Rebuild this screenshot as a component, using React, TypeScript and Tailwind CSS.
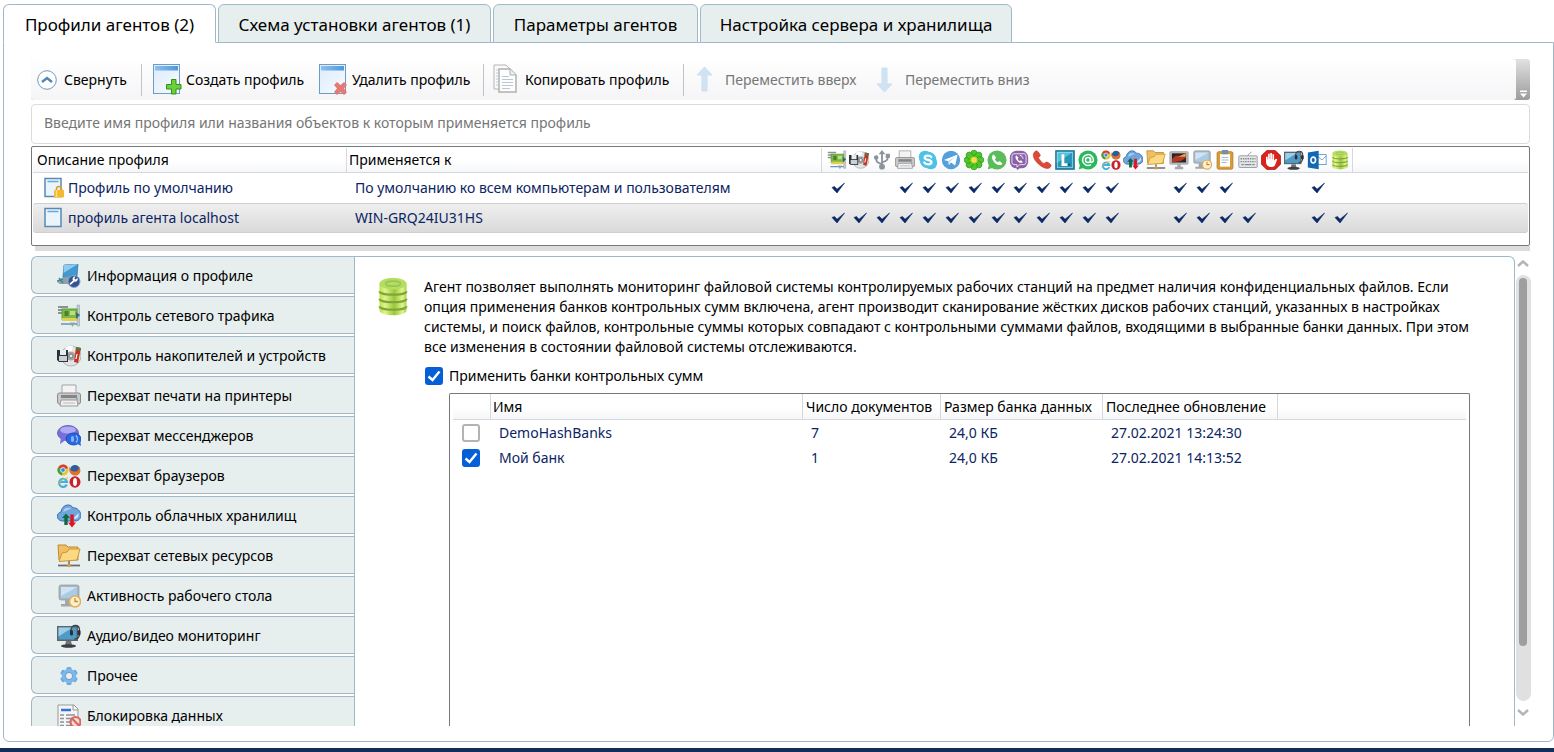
import type { ReactNode } from "react";

type IconName =
  | "net" | "disk" | "usb" | "printer" | "skype" | "telegram" | "icq" | "whatsapp" | "viber" | "phone"
  | "lync" | "agent" | "browsers" | "cloud" | "folder" | "screen" | "desktop" | "clipboard" | "keyboard"
  | "stop" | "av" | "outlook" | "db" | "info" | "chat" | "gear" | "block";

const drawings: Record<IconName, ReactNode> = {
  net: (
    <>
      <path d="M1 3h10M1 6h8M1 9h6" stroke="#8b9297" strokeWidth="2" />
      <path d="M20 1h2.500v21h-2.500z" fill="#c3ccd1" stroke="#8e9aa1" strokeWidth=".5" />
      <rect x="5" y="5" width="15" height="10" fill="#7cb944" stroke="#5f9d36" />
      <path d="M5 14h15v3h-15z" fill="#e2cf4e" />
      <rect x="7.500" y="7" width="4" height="5" fill="#4b8130" />
      <rect x="13" y="7" width="5" height="4" fill="#b7df8b" />
      <path d="M19 8l4 3-4 4z" fill="#3d6a6a" />
      <path d="M4 20h16" stroke="#5c97c7" strokeWidth="1.500" />
      <path d="M13 18.500h5l-2.500 4.500z" fill="#8fa3b0" />
    </>
  ),
  disk: (
    <>
      <circle cx="14" cy="12" r="10" fill="#e3e4e6" stroke="#b3b3b3" />
      <path d="M14 12L8 3.500a10 10 0 0 1 8-1.300z" fill="#fff" />
      <circle cx="14" cy="12" r="4.500" fill="#a2a4a8" />
      <circle cx="14" cy="12" r="2" fill="#e9e9e9" stroke="#777" />
      <path d="M0 6h11v12H2l-2-2z" fill="#2e3338" />
      <rect x="3" y="6" width="6" height="5" fill="#e7eef3" />
      <rect x="2" y="12" width="8" height="5" fill="#c7d1d8" />
      <path d="M19 3l5 1-3 15-4-1z" fill="#c73323" />
      <path d="M19.500 3l4.500 1-.6 3-4.500-1z" fill="#4b7b41" />
      <path d="M20 10l-1 5" stroke="#fff" strokeWidth="1.200" />
    </>
  ),
  usb: (
    <>
      <path d="M12 20V3M12 17C6 15 5 14 5 10M12 15c6-2 7-3 7-7" fill="none" stroke="#8d939b" strokeWidth="2.200" />
      <path d="M12 0l4 5H8z" fill="#8d939b" />
      <circle cx="12" cy="20" r="3.500" fill="#8d939b" />
      <circle cx="5" cy="9" r="2.700" fill="#8d939b" />
      <rect x="16.500" y="4.500" width="5" height="5" fill="#8d939b" />
    </>
  ),
  printer: (
    <>
      <path d="M5 1h14v10H5z" fill="#f4f4f4" stroke="#a3a3a3" />
      <rect x=".5" y="9" width="23" height="11" rx="2" fill="#c9c9c9" stroke="#8c8c8c" />
      <rect x="4" y="11" width="16" height="3" fill="#858585" />
      <path d="M4 16h16l1 6H3z" fill="#f1f1f1" stroke="#9b9b9b" />
      <path d="M6 19h12" stroke="#bbb" />
      <circle cx="20" cy="15" r="1" fill="#6bb1cf" />
    </>
  ),
  skype: (
    <>
      <rect x="1" y="1" width="15" height="15" rx="7" fill="#4fc0e6" />
      <rect x="8" y="8" width="15" height="15" rx="7" fill="#4fc0e6" />
      <circle cx="12" cy="12" r="10" fill="#4fc0e6" />
      <path d="M16 8.500C14.500 6 8 6 8 9.200c0 3.600 8.200 1.800 8.200 5.600 0 3.200-7 3.400-8.700.2" fill="none" stroke="#fff" strokeWidth="2.600" strokeLinecap="round" />
    </>
  ),
  telegram: (
    <>
      <circle cx="12" cy="12" r="11" fill="#559fdc" />
      <path d="M3.500 12L20 5.500 17 18.500l-5-3.500-2.500 3-.8-4.500z" fill="#fff" />
      <path d="M8.800 13.500L17 7.800l-6.500 6.700-1 3.500z" fill="#b6d5ef" />
    </>
  ),
  icq: (
    <>
      {[0, 45, 90, 135, 180, 225, 270, 315].map((a) => (
        <ellipse key={a} cx="12" cy="5" rx="3.800" ry="5" transform={`rotate(${a} 12 12)`} fill="#4fc62c" stroke="#289417" strokeWidth=".8" />
      ))}
      <circle cx="12" cy="12" r="4" fill="#f5e04a" stroke="#a8c12a" />
    </>
  ),
  whatsapp: (
    <>
      <circle cx="12" cy="12" r="11.500" fill="#5bbc5c" />
      <path d="M1 23l2-8 6 6z" fill="#5bbc5c" />
      <path d="M8 5.500C4.500 7 6 12 9.200 15.200s8 4 9.300 1l-3.500-3-2 1.500c-1.500-.6-3-2.200-3.500-3.700L11 9z" fill="#fff" />
    </>
  ),
  viber: (
    <>
      <rect x="1" y="1" width="22" height="21" rx="8" fill="#8b62a8" />
      <path d="M8 20h7l-5 4z" fill="#8b62a8" />
      <path d="M6 4.500h12q2.500 0 2.500 3v7q0 3-2.500 3h-5l-3.500 3v-3H6q-2.500 0-2.500-3v-7q0-3 2.500-3z" fill="none" stroke="#e6dcec" strokeWidth="1.200" />
      <path d="M9 6.500c-2.500 1-1 4.500 1.200 6.600s5.400 3.400 6.400 1.200l-2.200-1.900-1.600.9c-1-.4-2-1.500-2.300-2.700l1-1.200z" fill="#fff" />
      <path d="M13 6.500c2.500.4 3.600 1.700 3.800 4" fill="none" stroke="#fff" strokeWidth="1.200" />
    </>
  ),
  phone: <path d="M5 1C-1 4 1 11 8 17s13 7 15 2c.500-1.500-4-4.500-5.500-4.500S15 17 13.500 16 8.500 11 8 9.500 10 8 10 6.500 6.500.5 5 1z" fill="#dc4a37" stroke="#b93524" strokeWidth=".6" />,
  lync: (
    <>
      <rect x="1" y="1" width="22" height="22" fill="#2796b8" stroke="#256f88" strokeWidth="1.500" />
      <path d="M2 2h20L2 16z" fill="#55c0dc" />
      <rect x="2.800" y="2.800" width="18.400" height="18.400" fill="none" stroke="#a2e0f0" strokeWidth=".8" />
      <path d="M9.500 5v12.500H15" fill="none" stroke="#fff" strokeWidth="3.400" />
      <rect x="15.500" y="16" width="3" height="3" fill="#1c6480" />
    </>
  ),
  agent: (
    <>
      <path d="M1 23l2-8 6 6z" fill="#27b95b" />
      <circle cx="12" cy="12" r="11.500" fill="#27b95b" />
      <circle cx="12" cy="12" r="3" fill="none" stroke="#fff" strokeWidth="1.800" />
      <path d="M15 9v4.500c0 2 3.500 2 3.500-1.500a6.500 6.500 0 1 0-3 5.500" fill="none" stroke="#fff" strokeWidth="1.800" />
    </>
  ),
  browsers: (
    <>
      <circle cx="6" cy="6" r="5.500" fill="#e2c43a" />
      <path d="M6 6L1.200 3.200A5.500 5.500 0 0 1 11 4z" fill="#d6402d" />
      <path d="M6 6L1.200 3.200A5.500 5.500 0 0 0 5 11.400z" fill="#43a047" />
      <circle cx="6" cy="6" r="2.400" fill="#4489d8" stroke="#fff" strokeWidth=".8" />
      <circle cx="18" cy="6" r="5" fill="#2f5e9c" />
      <path d="M12.500 2c.5 5 2.500 5.500 5.500 5.500 2 0 4-1 4-5 3 4 1 9-4 9-3.500 0-7-3.500-5.500-9.500z" fill="#e1702a" />
      <path d="M9.800 20.500A4 4 0 1 1 10 18H3" fill="none" stroke="#48aee0" strokeWidth="2.200" />
      <path d="M1 21c0-3 6-7 10-7" fill="none" stroke="#e6bf3d" strokeWidth="1" />
      <ellipse cx="18" cy="18" rx="5.500" ry="5.800" fill="#c9202a" />
      <ellipse cx="18" cy="18" rx="2" ry="4" fill="#fff" />
    </>
  ),
  cloud: (
    <>
      <path d="M5 17C-1 16-1 9 4 8 5 0 14-1 16 4c4-1 8 4 8 7 0 4-3 6-6 6z" fill="#6fa6dd" stroke="#3d6eae" />
      <path d="M6 8c1-5 7-5 8-3-3 0-5 2-8 3z" fill="#b3d3f2" />
      <path d="M17 15c4 0 5-3 4.500-6-2 3-4 3-4.500 6z" fill="#d5e7f8" />
      <path d="M9 9.500l4 4.500h-2.300v7H7.300v-7H5z" fill="#0f6a44" />
      <path d="M15 23.500l4-5h-2.300v-8h-3.400v8H11z" fill="#e01420" />
    </>
  ),
  folder: (
    <>
      <path d="M1 1h8l2 2h10v13H2z" fill="#efc063" stroke="#bf8a31" />
      <path d="M5 9l5-1 2-3h11l-3 11L2 17.500z" fill="#fbd981" stroke="#c9963c" />
      <path d="M1 21.500h22" stroke="#6d6d6d" strokeWidth="1.800" />
      <path d="M12 17v4" stroke="#8a8a8a" strokeWidth="2" />
      <circle cx="12" cy="21.500" r="1.800" fill="#d89d3c" />
    </>
  ),
  screen: (
    <>
      <rect x="1" y="2" width="22" height="15" rx="1" fill="#b9bdc2" stroke="#9fa4a9" />
      <rect x="3.500" y="4" width="17" height="11" fill="#2f2423" />
      <path d="M3.500 15V11L8 7h12.500v2L15 13z" fill="#b23a25" />
      <path d="M11 8h9v-4z" fill="#eca33b" />
      <path d="M10 17h4v3h-4zM7 20h10v3H7z" fill="#a4a8ac" />
    </>
  ),
  desktop: (
    <>
      <rect x="2" y="1" width="20" height="15" rx="2" fill="#a9b4be" stroke="#8d99a5" strokeWidth=".7" />
      <rect x="4" y="3" width="16" height="11" fill="#a8cbe6" />
      <path d="M4 3h16L4 12z" fill="#cfe3f2" />
      <path d="M8 16h6v4H8zM4 20h12v2.500H4z" fill="#a3a7aa" />
      <circle cx="18" cy="17.500" r="5.500" fill="#fdf0cd" stroke="#e2b05a" strokeWidth="1.500" />
      <path d="M18 14V17.500h3" fill="none" stroke="#c08a35" strokeWidth="1.300" />
    </>
  ),
  clipboard: (
    <>
      <rect x="2.500" y="2" width="19" height="21" rx="2" fill="#d99c3b" stroke="#b47c2a" />
      <rect x="6" y="5" width="12" height="15" fill="#fbfcfd" />
      <rect x="8" y="0" width="8" height="5" rx="1" fill="#7b8fa3" />
      <path d="M8 9h8M8 12h8M8 15h6" stroke="#99aac0" />
    </>
  ),
  keyboard: (
    <>
      <rect x="1" y="7" width="22" height="14" rx="1" fill="#e4e7e9" stroke="#9aa0a5" strokeWidth="1.200" />
      <path d="M12 7c0-4 4-2 4-5" fill="none" stroke="#8c9298" />
      <path d="M3 10.500h18M3 14h18" stroke="#868c92" strokeWidth="1.600" strokeDasharray="1.800 1" />
      <path d="M4 17.500h3M8 17.500h8M17 17.500h3" stroke="#868c92" strokeWidth="1.600" />
    </>
  ),
  stop: (
    <>
      <path d="M7 .5h10L23.500 7v10L17 23.500H7L.5 17V7z" fill="#d9241c" stroke="#b01a14" />
      <path d="M6 9v5c0 4 3 6.500 6.500 6.500s4.500-2 5.500-5.500l1.500-4-1.800-.6-2 2.600V5h-2v6h-.6V3.500h-2V11h-.6V4.500h-2v7h-.5V8H6z" fill="#fff" />
    </>
  ),
  av: (
    <>
      <rect x="0" y="2" width="21" height="15" fill="#5a656d" />
      <rect x="1.500" y="3.500" width="18" height="12" fill="#4f9bc8" />
      <path d="M1.500 3.500h14l-14 9z" fill="#9fcde6" />
      <path d="M9 17h5l1 4H8z" fill="#707478" />
      <ellipse cx="11.500" cy="22" rx="7.500" ry="1.800" fill="#3c3f42" />
      <path d="M14 8V6c0-6 8.500-6 8.500 0v4c0 3-2 5-5 5" fill="none" stroke="#3d4348" strokeWidth="1.300" />
      <rect x="13" y="6" width="3" height="5.500" rx="1.500" fill="#2b2f33" />
      <rect x="20.500" y="6" width="3" height="5.500" rx="1.500" fill="#2b2f33" />
    </>
  ),
  outlook: (
    <>
      <rect x="12" y="5.500" width="11" height="12" fill="#fff" stroke="#5d94c9" />
      <path d="M12 7l6 5 5-5" fill="none" stroke="#5d94c9" />
      <path d="M1 3l13-2v22L1 21z" fill="#1268b3" />
      <ellipse cx="7.500" cy="12" rx="2.800" ry="3.500" fill="none" stroke="#fff" strokeWidth="1.900" />
    </>
  ),
  db: (
    <>
      <defs>
        <linearGradient id="db-side" x1="0" x2="1" y1="0" y2="0">
          <stop offset="0" stopColor="#b9de4c" />
          <stop offset=".2" stopColor="#e0f58c" />
          <stop offset=".55" stopColor="#9cc63c" />
          <stop offset=".85" stopColor="#e0f58c" />
          <stop offset="1" stopColor="#a8d044" />
        </linearGradient>
      </defs>
      <path d="M3 4v16c0 4 18 4 18 0V4z" fill="url(#db-side)" />
      <path d="M3 8.500c0 2.800 18 2.800 18 0M3 13c0 2.800 18 2.800 18 0M3 17.500c0 2.800 18 2.800 18 0" fill="none" stroke="#7ea63a" strokeWidth="1.300" />
      <ellipse cx="12" cy="4" rx="9" ry="3.500" fill="#b4dd62" />
      <ellipse cx="12" cy="4" rx="5" ry="1.500" fill="none" stroke="#98c654" />
    </>
  ),
  info: (
    <>
      <path d="M7 1l14-1-1 12-14 1z" fill="#3f9ad4" stroke="#2871a5" strokeWidth=".7" />
      <path d="M7 1l14-1L6.500 9z" fill="#8ecbec" />
      <path d="M6 13l12-1-6 8H3l-3-2z" fill="#8aa2b0" />
      <path d="M2 14l4 5M0 17l6-2" stroke="#3e8e8e" strokeWidth="1.500" />
      <circle cx="17" cy="17.500" r="6" fill="#35548f" stroke="#8aa4cc" />
      <path d="M13.500 21l4-3.500a2.500 2.500 0 0 0 3-3.500l-2 1.500-1.200-1 1.200-2c-2.500 0-3.500 2-2.500 4l-3.500 3z" fill="#fff" />
    </>
  ),
  chat: (
    <>
      <ellipse cx="11" cy="9" rx="10.500" ry="7.500" fill="#7670dc" stroke="#5550b2" strokeWidth=".8" />
      <path d="M4 13l-1 7 7-5z" fill="#7670dc" />
      <ellipse cx="11" cy="6" rx="8" ry="3.500" fill="#b2a9f5" />
      <ellipse cx="16.500" cy="15" rx="7.500" ry="6" fill="#2a66df" stroke="#1b3fae" strokeWidth=".8" />
      <path d="M19 19l5 3-1-7z" fill="#2a66df" />
      <path d="M19 11.500c1.800 2 1.800 5 0 7" fill="none" stroke="#9ad0ff" strokeWidth="1.200" />
      <rect x="14" y="12" width="3" height="6" rx="1.500" fill="#78b8f8" />
    </>
  ),
  gear: (
    <>
      {[0, 60, 120, 180, 240, 300].map((a) => (
        <rect key={a} x="9.500" y="3" width="5" height="6" rx="1.500" transform={`rotate(${a} 12 12)`} fill="#6aaae0" />
      ))}
      <circle cx="12" cy="12" r="5.500" fill="none" stroke="#7db8e8" strokeWidth="3.400" />
      <circle cx="12" cy="12" r="3.600" fill="#e8eeee" stroke="#5292c9" strokeWidth=".8" />
    </>
  ),
  block: (
    <>
      <path d="M1 1h16l4 4v19H1z" fill="#f4f5f6" stroke="#999" />
      <path d="M16 1v5h5" fill="none" stroke="#999" />
      <path d="M4 6h10" stroke="#2f74dc" strokeWidth="2.500" />
      <path d="M3 11h4M9 11h9M3 14.500h4M9 14.500h9M3 18h4M9 18h5M3 21.500h4M9 21.500h5" stroke="#8e9296" strokeWidth="1.500" />
      <circle cx="18.500" cy="18" r="5" fill="#f6dcd9" stroke="#d9675c" strokeWidth="2.200" />
      <path d="M15 14.500l7 7" stroke="#d9675c" strokeWidth="2.200" />
    </>
  ),
};

function Icon({ name, className }: { name: IconName; className: string }) {
  return (
    <svg viewBox="0 0 24 24" className={`shrink-0 ${className}`} aria-hidden="true">
      {drawings[name]}
    </svg>
  );
}

const headerIcons: IconName[] = [
  "net", "disk", "usb", "printer", "skype", "telegram", "icq", "whatsapp", "viber", "phone", "lync", "agent",
  "browsers", "cloud", "folder", "screen", "desktop", "clipboard", "keyboard", "stop", "av", "outlook", "db",
];
const narrowColumns = [1, 8, 13];

const profiles = [
  {
    name: "Профиль по умолчанию",
    target: "По умолчанию ко всем компьютерам и пользователям",
    locked: true,
    selected: false,
    checks: [0, 3, 4, 5, 6, 7, 8, 9, 10, 11, 12, 15, 16, 17, 21],
  },
  {
    name: "профиль агента localhost",
    target: "WIN-GRQ24IU31HS",
    locked: false,
    selected: true,
    checks: [0, 1, 2, 3, 4, 5, 6, 7, 8, 9, 10, 11, 12, 15, 16, 17, 18, 21, 22],
  },
];

const sections: { icon: IconName; label: string }[] = [
  { icon: "info", label: "Информация о профиле" },
  { icon: "net", label: "Контроль сетевого трафика" },
  { icon: "disk", label: "Контроль накопителей и устройств" },
  { icon: "printer", label: "Перехват печати на принтеры" },
  { icon: "chat", label: "Перехват мессенджеров" },
  { icon: "browsers", label: "Перехват браузеров" },
  { icon: "cloud", label: "Контроль облачных хранилищ" },
  { icon: "folder", label: "Перехват сетевых ресурсов" },
  { icon: "desktop", label: "Активность рабочего стола" },
  { icon: "av", label: "Аудио/видео мониторинг" },
  { icon: "gear", label: "Прочее" },
  { icon: "block", label: "Блокировка данных" },
];

const banks = [
  { name: "DemoHashBanks", count: "7", size: "24,0 КБ", updated: "27.02.2021 13:24:30", on: false },
  { name: "Мой банк", count: "1", size: "24,0 КБ", updated: "27.02.2021 14:13:52", on: true },
];

function WindowIcon({ badge }: { badge: "add" | "remove" }) {
  return (
    <svg viewBox="0 0 30 32" className="h-8 w-[30px] shrink-0" aria-hidden="true">
      <defs>
        <linearGradient id={`win-${badge}`} x1="0" y1="0" x2="1" y2="1">
          <stop offset="0" stopColor="#dcebfb" />
          <stop offset="1" stopColor="#f7fbff" />
        </linearGradient>
        <linearGradient id={`bar-${badge}`} x1="0" y1="0" x2="1" y2="0">
          <stop offset="0" stopColor="#8fc0ee" />
          <stop offset="1" stopColor="#4f97da" />
        </linearGradient>
      </defs>
      <rect x=".5" y=".5" width="26" height="29" fill={`url(#win-${badge})`} stroke="#6d9cc4" />
      <rect x="2" y="2" width="23" height="4.500" fill={`url(#bar-${badge})`} />
      {badge === "add" ? (
        <path d="M18.500 15.500h4.500v5h5v4.500h-5v5h-4.500v-5h-5v-4.500h5z" fill="#6cd03a" stroke="#2f8f1f" />
      ) : (
        <path d="M18 18l3.500 3L25 18l3 3-3 3.500 3 3.500-3 3-3.500-3-3.500 3-3-3 3-3.500-3-3.500z" fill="#e57a73" />
      )}
    </svg>
  );
}

function CopyIcon() {
  return (
    <svg viewBox="0 0 26 32" className="h-8 w-[26px] shrink-0" aria-hidden="true">
      <path d="M1 1h12l5 5v19H1z" fill="#fafafa" stroke="#b4b4b4" />
      <path d="M3 6h2M3 9h2M3 12h2M3 15h2M3 18h2M3 21h2" stroke="#c5ccd2" />
      <path d="M6 5h11l6 6v17H6z" fill="#fdfdfd" stroke="#b0b0b0" strokeWidth="1.500" />
      <path d="M17 5v6h6" fill="#eee" stroke="#b0b0b0" />
      <path d="M9 12.500h7M9 15.500h11M9 18.500h11M9 21.500h11M9 24.500h8" stroke="#b9c6d4" />
    </svg>
  );
}

function MoveIcon({ down = false }: { down?: boolean }) {
  return (
    <svg viewBox="0 0 18 28" className="h-7 w-[18px] shrink-0" aria-hidden="true">
      <path d={down ? "M6 2h5v16h5l-7.500 8L1 18h5z" : "M8.500 1l7.500 8h-5v16H6V9H1z"} fill="#d0e3f4" stroke="#cbdff1" strokeLinejoin="round" />
    </svg>
  );
}

function PageIcon({ locked }: { locked: boolean }) {
  return (
    <svg viewBox="0 0 20 22" className="h-[22px] w-5 shrink-0" aria-hidden="true">
      <rect x="1" y="1.500" width="16" height="18" fill="#eaf4fd" stroke="#5b89b3" strokeWidth="1.500" />
      <path d="M3.500 4.500h11" stroke="#68a8e2" strokeWidth="1.500" />
      {locked && (
        <>
          <path d="M12.500 14v-2a2.500 2.500 0 0 1 5 0v2" fill="none" stroke="#d9a32a" strokeWidth="1.700" />
          <rect x="10" y="13" width="10" height="7.500" rx="1" fill="#f5b92e" />
          <path d="M12.500 13v7" stroke="#fbe08a" strokeWidth="1.500" />
        </>
      )}
    </svg>
  );
}

function CheckMark() {
  return (
    <svg viewBox="0 0 14 12" className="mx-auto block h-3 w-[14px]" role="img" aria-label="да">
      <path d="M1 5.500l2.500-1L6 7.200 13.500 1 6 11z" fill="#0b2a66" stroke="#0b2a66" strokeWidth=".6" />
    </svg>
  );
}

const checkbox =
  "block size-[18px] shrink-0 appearance-none rounded-[3px] border-2 border-[#b3b3b3] bg-white checked:border-[#0560d8] checked:bg-[#0560d8]";

function Checkbox({ id, on, label }: { id: string; on: boolean; label?: string }) {
  return (
    <span className="grid shrink-0">
      <input id={id} type="checkbox" defaultChecked={on} aria-label={label} className={`peer col-start-1 row-start-1 ${checkbox}`} />
      <svg viewBox="0 0 18 18" className="pointer-events-none invisible col-start-1 row-start-1 size-[18px] peer-checked:visible" aria-hidden="true">
        <path d="M3.500 9.500L7.500 13L14.500 4.500" fill="none" stroke="#fff" strokeWidth="2.400" />
      </svg>
    </span>
  );
}

function Tab({ label, active = false, className }: { label: string; active?: boolean; className: string }) {
  return (
    <button
      type="button"
      role="tab"
      aria-selected={active}
      className={`h-[39px] rounded-t-[6px] border border-[#9fb9cb] pt-[2px] text-[17px] whitespace-nowrap ${
        active ? "border-b-white bg-white" : "bg-[#e7eeee]"
      } ${className}`}
    >
      {label}
    </button>
  );
}

function Separator() {
  return <span className="h-8 w-px shrink-0 bg-[#c2c2c8]" />;
}

const headCell = "border-r border-b border-[#d5d9dd] p-0 text-left font-normal whitespace-nowrap";

export default function App() {
  return (
    <div className="flex h-screen flex-col overflow-hidden bg-white pt-1 font-['Noto_Sans','Open_Sans',sans-serif] text-[14px] leading-5 text-black">
      <div role="tablist" className="relative z-10 -mb-px ml-[3px] flex gap-[2px]">
        <Tab label="Профили агентов (2)" active className="w-[213px]" />
        <Tab label="Схема установки агентов (1)" className="w-[273px]" />
        <Tab label="Параметры агентов" className="w-[205px]" />
        <Tab label="Настройка сервера и хранилища" className="w-[312px]" />
      </div>

      <main className="ml-[3px] flex min-h-0 flex-1 flex-col rounded-b-[6px] border border-[#9fb9cb] pt-4 pr-[23px] pb-[15px] pl-[27px]">
        <div className="flex h-[41px] shrink-0 rounded-[3px] bg-linear-to-b from-[#e2e2e2] to-[#9c9c9c]">
          <div role="toolbar" className="flex min-w-0 flex-1 items-center overflow-hidden rounded-[3px] bg-linear-to-b from-white to-[#f5f4f6] pl-[6px] whitespace-nowrap">
            <button type="button" className="flex w-[104px] items-center gap-[7px]">
              <svg viewBox="0 0 20 20" className="size-5 shrink-0" aria-hidden="true">
                <circle cx="10" cy="10" r="9.300" fill="#fff" stroke="#6c99bd" />
                <path d="M5 12L10 8l5 4" fill="none" stroke="#4f86b3" strokeWidth="2.500" />
              </svg>
              Свернуть
            </button>
            <Separator />
            <button type="button" className="ml-[11px] flex w-[166px] items-center gap-[3px]">
              <WindowIcon badge="add" />
              Создать профиль
            </button>
            <button type="button" className="flex w-[164px] items-center gap-[3px]">
              <WindowIcon badge="remove" />
              Удалить профиль
            </button>
            <Separator />
            <button type="button" className="ml-[9px] flex w-[190px] items-center gap-[6px]">
              <CopyIcon />
              Копировать профиль
            </button>
            <Separator />
            <button type="button" disabled className="ml-3 flex w-[180px] items-center gap-[11px] text-[#767676]">
              <MoveIcon />
              Переместить вверх
            </button>
            <button type="button" disabled className="flex items-center gap-[11px] text-[#767676]">
              <MoveIcon down />
              Переместить вниз
            </button>
          </div>
          <button type="button" aria-label="Параметры панели" className="flex w-[14px] shrink-0 items-end justify-center pb-[2px]">
            <svg viewBox="0 0 8 8" className="size-2" aria-hidden="true">
              <path d="M1 .5h7v1.500H1zM1 3.500h7L4.500 7.500z" fill="#fff" />
            </svg>
          </button>
        </div>

        <input
          type="text"
          aria-label="Поиск профиля"
          placeholder="Введите имя профиля или названия объектов к которым применяется профиль"
          className="mt-1 h-10 shrink-0 rounded-[4px] border border-[#dcdcdc] px-3 pb-1 placeholder:text-[#767676]"
        />

        <div className="mt-[2px] h-[100px] shrink-0 overflow-hidden rounded-[2px] border border-[#74787c] px-px pt-px">
          <table className="w-full table-fixed border-separate border-spacing-0">
            <colgroup>
              <col className="w-[314px]" />
              <col className="w-[475px]" />
              <col className="w-1" />
              {headerIcons.map((n, i) => (
                <col key={n} className={narrowColumns.includes(i) ? "w-[22px]" : "w-[23px]"} />
              ))}
              <col />
            </colgroup>
            <thead>
              <tr className="h-[25px] bg-linear-to-b from-white from-50% to-[#f5f6f8]">
                <th className={`${headCell} pl-1`}>Описание профиля</th>
                <th className={`${headCell} pl-[2px]`}>Применяется к</th>
                <th className="border-b border-[#d5d9dd] p-0" />
                {headerIcons.map((n) => (
                  <th key={n} className="border-b border-[#d5d9dd] p-0 pr-[2px]">
                    <Icon name={n} className="mx-auto block size-5" />
                  </th>
                ))}
                <th className="border-b border-l border-[#d5d9dd] p-0" />
              </tr>
            </thead>
            <tbody className="text-[#0b2463]">
              {profiles.map((p) => {
                const cell = p.selected ? "border-y border-[#cfcfcf] bg-linear-to-b from-[#efefef] to-[#dadada]" : "border-y border-transparent";
                return (
                  <tr key={p.name} className="h-[30px]">
                    <td className={`rounded-l-[3px] p-0 pl-[11px] ${cell}`}>
                      <span className="flex items-center gap-[4px]">
                        <PageIcon locked={p.locked} />
                        {p.name}
                      </span>
                    </td>
                    <td className={`p-0 pl-2 ${cell}`}>{p.target}</td>
                    <td className={`p-0 ${cell}`} />
                    {headerIcons.map((n, i) => (
                      <td key={n} className={`p-0 ${cell}`}>
                        {p.checks.includes(i) && <CheckMark />}
                      </td>
                    ))}
                    <td className={`rounded-r-[3px] p-0 ${cell}`} />
                  </tr>
                );
              })}
            </tbody>
          </table>
        </div>
        <div className="ml-1 h-[5px] shrink-0 bg-[#dcdcdc]" />

        <div className="mt-[5px] -mr-px flex min-h-0 flex-1">
          <nav className="flex w-[323px] shrink-0 flex-col gap-[2px] overflow-hidden">
            {sections.map((s) => (
              <button
                key={s.label}
                type="button"
                className="flex h-[38px] shrink-0 items-center gap-[6px] rounded-l-[6px] border border-r-0 border-[#9fb9cb] bg-[#e7eeee] pt-[2px] pl-[25px] whitespace-nowrap"
              >
                <Icon name={s.icon} className="size-6" />
                {s.label}
              </button>
            ))}
          </nav>

          <section className="flex min-w-0 flex-1 gap-[13px] overflow-hidden rounded-tr-[6px] border border-b-0 border-[#9fb9cb] pt-5 pr-6 pl-5">
            <svg viewBox="0 0 24 24" preserveAspectRatio="none" className="h-10 w-9 shrink-0" aria-hidden="true">
              {drawings.db}
            </svg>
            <div className="flex min-w-0 flex-1 flex-col">
              <p className="mr-1">
                Агент позволяет выполнять мониторинг файловой системы контролируемых рабочих станций на предмет наличия конфиденциальных файлов. Если
                опция применения банков контрольных сумм включена, агент производит сканирование жёстких дисков рабочих станций, указанных в настройках
                системы, и поиск файлов, контрольные суммы которых совпадают с контрольными суммами файлов, входящими в выбранные банки данных. При этом
                все изменения в состоянии файловой системы отслеживаются.
              </p>
              <label htmlFor="apply-banks" className="mt-[9px] ml-px flex items-center gap-[6px]">
                <Checkbox id="apply-banks" on />
                Применить банки контрольных сумм
              </label>
              <div className="mt-[7px] mr-[20px] ml-[25px] min-h-0 flex-1 overflow-hidden rounded-t-[2px] border border-b-0 border-[#74787c] px-[3px]">
                <table className="w-full table-fixed border-separate border-spacing-0">
                  <colgroup>
                    <col className="w-[38px]" />
                    <col className="w-[312px]" />
                    <col className="w-[138px]" />
                    <col className="w-[162px]" />
                    <col className="w-[175px]" />
                    <col />
                  </colgroup>
                  <thead>
                    <tr className="h-[26px] bg-linear-to-b from-white from-50% to-[#f5f6f8]">
                      <th className={headCell} aria-label="Выбор" />
                      <th className={`${headCell} pl-[2px]`}>Имя</th>
                      <th className={`${headCell} pl-[3px]`}>Число документов</th>
                      <th className={`${headCell} pl-[3px]`}>Размер банка данных</th>
                      <th className={`${headCell} pl-[3px]`}>Последнее обновление</th>
                      <th className="border-b border-[#d5d9dd] p-0" />
                    </tr>
                  </thead>
                  <tbody className="text-[#0b2463]">
                    {banks.map((b) => (
                      <tr key={b.name} className="h-[25px]">
                        <td className="p-0 pl-[9px]">
                          <Checkbox id={`bank-${b.count}`} on={b.on} label={b.name} />
                        </td>
                        <td className="p-0 pl-2">{b.name}</td>
                        <td className="p-0 pl-2">{b.count}</td>
                        <td className="p-0 pl-2">{b.size}</td>
                        <td className="p-0 pl-2">{b.updated}</td>
                        <td className="p-0" />
                      </tr>
                    ))}
                  </tbody>
                </table>
              </div>
            </div>
          </section>

          <div className="flex w-4 shrink-0 flex-col items-center pt-1 pb-[10px]">
            <svg viewBox="0 0 12 7" className="h-[7px] w-3" aria-hidden="true">
              <path d="M1 6l5-4.500L11 6" fill="none" stroke="#b4b4b4" strokeWidth="2.400" />
            </svg>
            <div className="my-2 flex w-[15px] flex-1 flex-col items-center rounded-full bg-[#e0e0e0] pt-[3px]">
              <div className="h-[87%] w-2 rounded-full bg-[#9e9e9e]" />
            </div>
            <svg viewBox="0 0 12 7" className="h-[7px] w-3" aria-hidden="true">
              <path d="M1 1l5 4.500L11 1" fill="none" stroke="#b4b4b4" strokeWidth="2.400" />
            </svg>
          </div>
        </div>
      </main>
      <div className="mt-[6px] h-1 shrink-0 bg-[#10305a]" />
    </div>
  );
}
